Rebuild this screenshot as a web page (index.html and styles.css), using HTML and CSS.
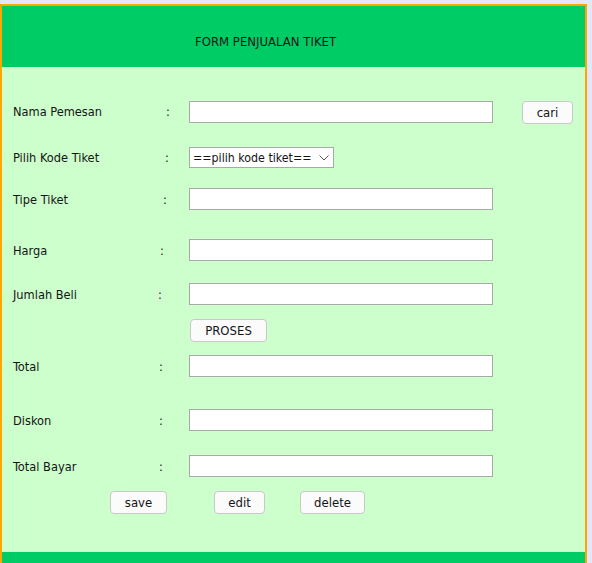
FILE: index.html
```html
<!DOCTYPE html>
<html>
<head>
<meta charset="utf-8">
<title>Form Penjualan Tiket</title>
<link rel="stylesheet" href="styles.css">
</head>
<body>
<div class="frame">
  <div class="header">FORM PENJUALAN TIKET</div>
  <div class="content">
    <div class="row r1">
      <span class="label">Nama Pemesan</span><span class="colon c8">:</span>
      <input class="field" type="text">
      <button class="btn cari">cari</button>
    </div>
    <div class="row r2">
      <span class="label">Pilih Kode Tiket</span><span class="colon c7">:</span>
      <div class="select"><span class="opt">==pilih kode tiket==</span>
        <svg width="10" height="6" viewBox="0 0 10 6"><path d="M0.5 0.5 L5 5 L9.5 0.5" fill="none" stroke="#555" stroke-width="1"/></svg>
      </div>
    </div>
    <div class="row r3">
      <span class="label">Tipe Tiket</span><span class="colon c5">:</span>
      <input class="field" type="text">
    </div>
    <div class="row r4">
      <span class="label">Harga</span><span class="colon c2">:</span>
      <input class="field" type="text">
    </div>
    <div class="row r5">
      <span class="label">Jumlah Beli</span><span class="colon c0">:</span>
      <input class="field" type="text">
    </div>
    <div class="row r6">
      <span class="spacer"></span>
      <button class="btn proses">PROSES</button>
    </div>
    <div class="row r7">
      <span class="label">Total</span><span class="colon c1">:</span>
      <input class="field" type="text">
    </div>
    <div class="row r8">
      <span class="label">Diskon</span><span class="colon c1">:</span>
      <input class="field" type="text">
    </div>
    <div class="row r9">
      <span class="label">Total Bayar</span><span class="colon c1">:</span>
      <input class="field" type="text">
    </div>
    <div class="row r10">
      <button class="btn save">save</button>
      <button class="btn edit">edit</button>
      <button class="btn delete">delete</button>
    </div>
  </div>
  <div class="footer"></div>
</div>
</body>
</html>
```
FILE: styles.css
```css
html, body {
  margin: 0;
  padding: 0;
  background: #e6e6fa;
  font-family: "DejaVu Sans Condensed", "DejaVu Sans", sans-serif;
  font-size: 12.7px;
  color: #141414;
}
.frame {
  margin-top: 4px;
  width: 583px;
  border: 2px solid #ffa500;
  border-bottom: none;
  background: #ccffcc;
}
.header {
  background: #00cc66;
  height: 61px;
  line-height: 72px;
  padding-left: 193px;
  font-size: 13px;
}
.content {
  display: flex;
  flex-direction: column;
  padding-bottom: 38px;
}
.row {
  display: flex;
  align-items: center;
  height: 22px;
}
.r1 { margin-top: 34px; height: 23px; align-items: flex-start; }
.r1 .label, .r1 .colon { line-height: 22px; }
.r2 { margin-top: 23px; height: 21px; }
.r3 { margin-top: 20px; }
.r4 { margin-top: 29px; }
.r5 { margin-top: 22px; }
.r6 { margin-top: 14px; height: 23px; }
.r7 { margin-top: 13px; }
.r8 { margin-top: 32px; }
.r9 { margin-top: 24px; }
.r10 { margin-top: 14px; height: 23px; }
.label {
  width: 156px;
  padding-left: 11px;
  box-sizing: border-box;
  flex: none;
  white-space: nowrap;
}
.colon {
  width: 20px;
  box-sizing: border-box;
  flex: none;
}
.c0 { padding-left: 0; }
.c1 { padding-left: 1px; }
.c2 { padding-left: 2px; }
.c5 { padding-left: 5px; }
.c7 { padding-left: 7px; }
.c8 { padding-left: 8px; }
.spacer { width: 188px; flex: none; }
.field {
  width: 304px;
  height: 22px;
  box-sizing: border-box;
  border: 1px solid #a9a9a9;
  background: #fff;
  margin: 0 0 0 11px;
  padding: 0;
}
.select {
  margin-left: 11px;
  width: 145px;
  height: 21px;
  box-sizing: border-box;
  border: 1px solid #a9a9a9;
  background: #fff;
  display: flex;
  align-items: center;
  justify-content: space-between;
  padding: 0 4px 0 3px;
  color: #141414;
}
.opt {
  white-space: nowrap;
  font-size: 12.3px;
}
.select svg { flex: none; margin-top: 1px; }
.btn {
  font-family: inherit;
  font-size: 13px;
  color: #141414;
  height: 23px;
  box-sizing: border-box;
  border: 1px solid #c8c8c8;
  border-radius: 4px;
  background: #fbfbfb;
  padding: 0;
  margin: 0;
}
.cari { width: 51px; margin-left: 29px; }
.proses { width: 77px; }
.save { width: 57px; margin-left: 108px; }
.edit { width: 51px; margin-left: 47px; }
.delete { width: 65px; margin-left: 35px; }
.footer {
  background: #00cc66;
  height: 20px;
}
```
